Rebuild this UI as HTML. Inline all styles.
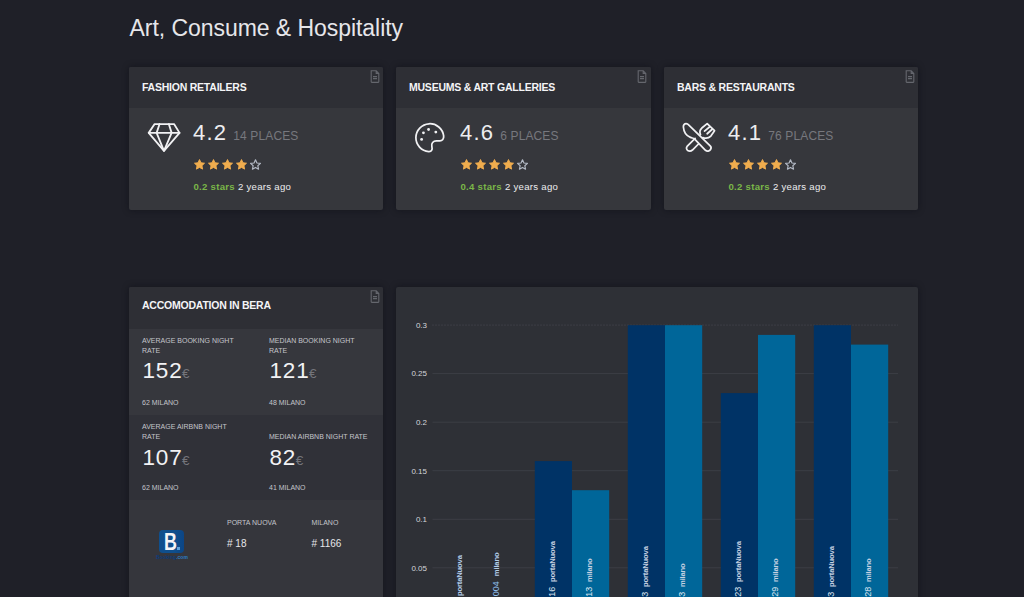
<!DOCTYPE html>
<html lang="en">
<head>
<meta charset="utf-8">
<title>Art, Consume &amp; Hospitality</title>
<style>
*{box-sizing:border-box;margin:0;padding:0}
html,body{width:1024px;height:597px;overflow:hidden;background:#1f2028;font-family:"Liberation Sans",sans-serif;color:#f2f2f2}
.abs{position:absolute}
h1{position:absolute;left:129.5px;top:14px;font-size:23px;font-weight:normal;line-height:28px;color:#e6e6ea;white-space:nowrap;letter-spacing:-0.05px}
.card{position:absolute;background:#36373c;border-radius:2px;box-shadow:0 0 7px rgba(8,8,14,.42)}
.card .hd{position:absolute;left:0;top:0;right:0;background:#2e2f35;border-radius:2px 2px 0 0}
.card .tt{position:absolute;left:13px;font-size:10.5px;font-weight:bold;letter-spacing:-0.23px;color:#f4f4f6;white-space:nowrap;line-height:12px}
.fi{position:absolute;right:3px;top:3px;width:10px;height:13px}
.num{position:absolute;font-size:22px;letter-spacing:1.2px;line-height:24px;color:#ededf0;white-space:nowrap}
.pl{position:absolute;font-size:12px;letter-spacing:0.12px;line-height:14px;color:#77787e;white-space:nowrap}
.stars{position:absolute;left:64px;top:91px;width:70px;height:12px}
.ago{position:absolute;left:64.5px;top:114.2px;font-size:9.6px;letter-spacing:0.28px;line-height:12px;white-space:nowrap;color:#ececee}
.ago b{color:#7ab648}
.ico{position:absolute}
.lab{position:absolute;font-size:7px;line-height:10.4px;color:#c4c5cb;white-space:nowrap}
.big{position:absolute;font-size:22.5px;letter-spacing:0.8px;line-height:24px;color:#f2f2f4;white-space:nowrap}
.big span{font-size:13.5px;color:#74757b;margin-left:-0.5px;letter-spacing:0}
.v{position:absolute;font-size:10px;line-height:12px;color:#e6e6ea;white-space:nowrap}
</style>
</head>
<body>
<h1 id="h1">Art, Consume &amp; Hospitality</h1>

<!-- card 1 -->
<div class="card" id="c1" style="left:129px;top:67px;width:254px;height:143px">
  <div class="hd" style="height:41px"></div>
  <div class="tt" id="t1" style="top:14.2px">FASHION RETAILERS</div>
  <svg class="fi" viewBox="0 0 10 13"><path d="M1.2 0.8h5l2.6 2.6v8.4a0.6 0.6 0 0 1-.6.6h-6.4a0.6 0.6 0 0 1-.6-.6z M6.2 0.8v2.6h2.6" fill="none" stroke="#65676e" stroke-width="1.1"/><path d="M3 6.6h4M3 8.6h4" stroke="#65676e" stroke-width="1.1"/></svg>
  <svg class="ico" style="left:13px;top:51px" width="48" height="40" viewBox="0 0 716 597" fill="none" stroke="#f1f1f3" stroke-width="27" stroke-linejoin="round" stroke-linecap="round">
    <path d="M188 90H478L560 222L328 490L100 222Z"/>
    <path d="M100 222H560"/>
    <path d="M262 90L218 222L328 490L442 222L400 90"/>
  </svg>
  <div class="num" id="n1" style="left:64px;top:53.8px">4.2</div>
  <div class="pl" id="p1" style="left:104.3px;top:62px">14 PLACES</div>
  <svg class="stars" viewBox="0 -0.55 70 12">
    <g fill="#f0ad4e" stroke="#f0ad4e" stroke-width="0.9" stroke-linejoin="round">
      <polygon transform="translate(6.5,6.3)" points="0.00,-5.30 1.53,-2.10 5.04,-1.64 2.47,0.80 3.12,4.29 0.00,2.60 -3.12,4.29 -2.47,0.80 -5.04,-1.64 -1.53,-2.10"/>
      <polygon transform="translate(20.5,6.3)" points="0.00,-5.30 1.53,-2.10 5.04,-1.64 2.47,0.80 3.12,4.29 0.00,2.60 -3.12,4.29 -2.47,0.80 -5.04,-1.64 -1.53,-2.10"/>
      <polygon transform="translate(34.5,6.3)" points="0.00,-5.30 1.53,-2.10 5.04,-1.64 2.47,0.80 3.12,4.29 0.00,2.60 -3.12,4.29 -2.47,0.80 -5.04,-1.64 -1.53,-2.10"/>
      <polygon transform="translate(48.5,6.3)" points="0.00,-5.30 1.53,-2.10 5.04,-1.64 2.47,0.80 3.12,4.29 0.00,2.60 -3.12,4.29 -2.47,0.80 -5.04,-1.64 -1.53,-2.10"/>
    </g>
    <polygon transform="translate(62.5,6.4)" fill="none" stroke="#b4bac6" stroke-width="1.15" stroke-linejoin="round" points="0.00,-5.20 1.45,-1.96 4.95,-1.60 2.30,0.75 3.06,4.21 0.00,2.45 -3.06,4.21 -2.30,0.75 -4.95,-1.60 -1.45,-1.96"/>
  </svg>
  <div class="ago" id="a1"><b>0.2 stars</b> 2 years ago</div>
</div>

<!-- card 2 -->
<div class="card" id="c2" style="left:396px;top:67px;width:255px;height:143px">
  <div class="hd" style="height:41px"></div>
  <div class="tt" id="t2" style="top:14.2px">MUSEUMS &amp; ART GALLERIES</div>
  <svg class="fi" style="right:4px" viewBox="0 0 10 13"><path d="M1.2 0.8h5l2.6 2.6v8.4a0.6 0.6 0 0 1-.6.6h-6.4a0.6 0.6 0 0 1-.6-.6z M6.2 0.8v2.6h2.6" fill="none" stroke="#65676e" stroke-width="1.1"/><path d="M3 6.6h4M3 8.6h4" stroke="#65676e" stroke-width="1.1"/></svg>
  <svg class="ico" style="left:12px;top:51px" width="48" height="40" viewBox="0 0 716 597" fill="none" stroke="#f1f1f3" stroke-width="26" stroke-linejoin="round" stroke-linecap="round">
    <path transform="translate(4,6)" d="M528 262A208 208 0 1 0 305 495C352 497 362 462 352 420C340 370 372 338 420 336L470 335C510 333 532 305 528 262Z"/>
    <g fill="#f1f1f3" stroke="none"><circle cx="307" cy="172" r="21"/><circle cx="230" cy="222" r="21"/><circle cx="415" cy="210" r="21"/><circle cx="203" cy="320" r="21"/></g>
  </svg>
  <div class="num" id="n2" style="left:64px;top:53.8px">4.6</div>
  <div class="pl" id="p2" style="left:104.3px;top:62px">6 PLACES</div>
  <svg class="stars" viewBox="0 -0.55 70 12">
    <g fill="#f0ad4e" stroke="#f0ad4e" stroke-width="0.9" stroke-linejoin="round">
      <polygon transform="translate(6.5,6.3)" points="0.00,-5.30 1.53,-2.10 5.04,-1.64 2.47,0.80 3.12,4.29 0.00,2.60 -3.12,4.29 -2.47,0.80 -5.04,-1.64 -1.53,-2.10"/>
      <polygon transform="translate(20.5,6.3)" points="0.00,-5.30 1.53,-2.10 5.04,-1.64 2.47,0.80 3.12,4.29 0.00,2.60 -3.12,4.29 -2.47,0.80 -5.04,-1.64 -1.53,-2.10"/>
      <polygon transform="translate(34.5,6.3)" points="0.00,-5.30 1.53,-2.10 5.04,-1.64 2.47,0.80 3.12,4.29 0.00,2.60 -3.12,4.29 -2.47,0.80 -5.04,-1.64 -1.53,-2.10"/>
      <polygon transform="translate(48.5,6.3)" points="0.00,-5.30 1.53,-2.10 5.04,-1.64 2.47,0.80 3.12,4.29 0.00,2.60 -3.12,4.29 -2.47,0.80 -5.04,-1.64 -1.53,-2.10"/>
    </g>
    <polygon transform="translate(62.5,6.4)" fill="none" stroke="#b4bac6" stroke-width="1.15" stroke-linejoin="round" points="0.00,-5.20 1.45,-1.96 4.95,-1.60 2.30,0.75 3.06,4.21 0.00,2.45 -3.06,4.21 -2.30,0.75 -4.95,-1.60 -1.45,-1.96"/>
  </svg>
  <div class="ago" id="a2"><b>0.4 stars</b> 2 years ago</div>
</div>

<!-- card 3 -->
<div class="card" id="c3" style="left:664px;top:67px;width:254px;height:143px">
  <div class="hd" style="height:41px"></div>
  <div class="tt" id="t3" style="top:14.2px">BARS &amp; RESTAURANTS</div>
  <svg class="fi" viewBox="0 0 10 13"><path d="M1.2 0.8h5l2.6 2.6v8.4a0.6 0.6 0 0 1-.6.6h-6.4a0.6 0.6 0 0 1-.6-.6z M6.2 0.8v2.6h2.6" fill="none" stroke="#65676e" stroke-width="1.1"/><path d="M3 6.6h4M3 8.6h4" stroke="#65676e" stroke-width="1.1"/></svg>
  <svg class="ico" style="left:12px;top:51px" width="48" height="40" viewBox="0 0 716 597" fill="none" stroke="#f1f1f3" stroke-width="26" stroke-linejoin="round" stroke-linecap="round">
    <!-- fork -->
    <path d="M285 305L165 425C150 445 155 470 175 485C200 500 225 495 245 478L335 388"/>
    <path d="M400 292C440 305 490 300 520 270L575 190L465 85L385 150C350 180 352 215 365 248"/>
    <path d="M500 135L425 195M540 168L465 235"/>
    <!-- knife -->
    <path d="M150 85C125 85 108 105 110 135C115 200 150 265 215 290C240 300 262 300 275 312L440 482C465 502 500 495 515 470C528 450 525 430 510 415L180 95C170 88 160 85 150 85Z"/>
  </svg>
  <div class="num" id="n3" style="left:64px;top:53.8px">4.1</div>
  <div class="pl" id="p3" style="left:104.3px;top:62px">76 PLACES</div>
  <svg class="stars" viewBox="0 -0.55 70 12">
    <g fill="#f0ad4e" stroke="#f0ad4e" stroke-width="0.9" stroke-linejoin="round">
      <polygon transform="translate(6.5,6.3)" points="0.00,-5.30 1.53,-2.10 5.04,-1.64 2.47,0.80 3.12,4.29 0.00,2.60 -3.12,4.29 -2.47,0.80 -5.04,-1.64 -1.53,-2.10"/>
      <polygon transform="translate(20.5,6.3)" points="0.00,-5.30 1.53,-2.10 5.04,-1.64 2.47,0.80 3.12,4.29 0.00,2.60 -3.12,4.29 -2.47,0.80 -5.04,-1.64 -1.53,-2.10"/>
      <polygon transform="translate(34.5,6.3)" points="0.00,-5.30 1.53,-2.10 5.04,-1.64 2.47,0.80 3.12,4.29 0.00,2.60 -3.12,4.29 -2.47,0.80 -5.04,-1.64 -1.53,-2.10"/>
      <polygon transform="translate(48.5,6.3)" points="0.00,-5.30 1.53,-2.10 5.04,-1.64 2.47,0.80 3.12,4.29 0.00,2.60 -3.12,4.29 -2.47,0.80 -5.04,-1.64 -1.53,-2.10"/>
    </g>
    <polygon transform="translate(62.5,6.4)" fill="none" stroke="#b4bac6" stroke-width="1.15" stroke-linejoin="round" points="0.00,-5.20 1.45,-1.96 4.95,-1.60 2.30,0.75 3.06,4.21 0.00,2.45 -3.06,4.21 -2.30,0.75 -4.95,-1.60 -1.45,-1.96"/>
  </svg>
  <div class="ago" id="a3"><b>0.2 stars</b> 2 years ago</div>
</div>


<!-- accomodation panel -->
<div class="card" id="c4" style="left:129px;top:286.7px;width:254.3px;height:330px;background:#35363c">
  <div class="hd" style="height:42px"></div>
  <div class="tt" id="t4" style="top:12.5px">ACCOMODATION IN BERA</div>
  <svg class="fi" viewBox="0 0 10 13"><path d="M1.2 0.8h5l2.6 2.6v8.4a0.6 0.6 0 0 1-.6.6h-6.4a0.6 0.6 0 0 1-.6-.6z M6.2 0.8v2.6h2.6" fill="none" stroke="#65676e" stroke-width="1.1"/><path d="M3 6.6h4M3 8.6h4" stroke="#65676e" stroke-width="1.1"/></svg>
  <div class="abs" style="left:0;top:42px;width:254px;height:86px;background:#36373d"></div>
  <div class="abs" style="left:0;top:128px;width:254px;height:85px;background:#303138"></div>
  <div class="lab" id="l1" style="left:13px;top:49px">AVERAGE BOOKING NIGHT<br>RATE</div>
  <div class="lab" id="l2" style="left:140px;top:49px">MEDIAN BOOKING NIGHT<br>RATE</div>
  <div class="big" id="b1" style="left:13.5px;top:72.8px">152<span>€</span></div>
  <div class="big" id="b2" style="left:140.5px;top:72.8px">121<span>€</span></div>
  <div class="lab" id="m1" style="left:13px;top:111px">62 MILANO</div>
  <div class="lab" id="m2" style="left:140px;top:111px">48 MILANO</div>

  <div class="lab" id="l3" style="left:13px;top:135px">AVERAGE AIRBNB NIGHT<br>RATE</div>
  <div class="lab" id="l4" style="left:140px;top:145px">MEDIAN AIRBNB NIGHT RATE</div>
  <div class="big" id="b3" style="left:13.5px;top:159px">107<span>€</span></div>
  <div class="big" id="b4" style="left:140.5px;top:159px">82<span>€</span></div>
  <div class="lab" id="m3" style="left:13px;top:196.5px">62 MILANO</div>
  <div class="lab" id="m4" style="left:140px;top:196.5px">41 MILANO</div>

  <div class="abs" id="logo" style="left:30.4px;top:243px;width:24.7px;height:23.2px;border-radius:4px;background:linear-gradient(90deg,#0f4f8d 0%,#0f4f8d 60%,#0b4585 100%)">
    <div class="abs" id="logoB" style="left:4.2px;top:-0.5px;font-size:23px;line-height:26px;font-weight:bold;color:#f4f4f6;transform:scaleX(.78);transform-origin:0 0">B</div>
    <div class="abs" style="left:17.5px;top:17px;width:3.4px;height:3.4px;background:#5fa3dc"></div>
  </div>
  <div class="abs" id="bk" style="left:27px;top:267px;font-size:5px;line-height:6px;font-weight:bold;color:#0c3b7a;white-space:nowrap;letter-spacing:0.02px">Booking<span style="color:#2b7cc4">.com</span></div>

  <div class="lab" id="pn" style="left:98px;top:231.3px">PORTA NUOVA</div>
  <div class="lab" id="mi" style="left:182.5px;top:231.3px">MILANO</div>
  <div class="v" id="v1" style="left:98px;top:251px"># 18</div>
  <div class="v" id="v2" style="left:182.5px;top:251px"># 1166</div>
  <div class="v" id="v3" style="left:98px;top:310px"># 231</div>
  <div class="v" id="v4" style="left:182.5px;top:310px"># 18055</div>
</div>

<!-- chart panel -->
<div class="card" id="c5" style="left:396px;top:286.7px;width:522px;height:330px;background:#2e3036"></div>
<svg class="abs" id="chart" style="left:396px;top:287px" width="521" height="310" viewBox="396 287 521 310" font-family="'Liberation Sans', sans-serif">
<line x1="432.5" x2="898" y1="325.1" y2="325.1" stroke="#4a4c54" stroke-width="1" stroke-dasharray="1 2"/>
<text x="427" y="327.9" font-size="8" fill="#d4d5da" text-anchor="end">0.3</text>
<line x1="432.5" x2="898" y1="373.6" y2="373.6" stroke="#3c3e45" stroke-width="1"/>
<text x="427" y="376.4" font-size="8" fill="#d4d5da" text-anchor="end">0.25</text>
<line x1="432.5" x2="898" y1="422.2" y2="422.2" stroke="#3c3e45" stroke-width="1"/>
<text x="427" y="425.0" font-size="8" fill="#d4d5da" text-anchor="end">0.2</text>
<line x1="432.5" x2="898" y1="470.7" y2="470.7" stroke="#3c3e45" stroke-width="1"/>
<text x="427" y="473.5" font-size="8" fill="#d4d5da" text-anchor="end">0.15</text>
<line x1="432.5" x2="898" y1="519.3" y2="519.3" stroke="#3c3e45" stroke-width="1"/>
<text x="427" y="522.1" font-size="8" fill="#d4d5da" text-anchor="end">0.1</text>
<line x1="432.5" x2="898" y1="567.8" y2="567.8" stroke="#3c3e45" stroke-width="1"/>
<text x="427" y="570.6" font-size="8" fill="#d4d5da" text-anchor="end">0.05</text>
<rect x="479.0" y="612.5" width="37.2" height="3.9" fill="#006699"/>
<text transform="translate(461.6,605.8) rotate(-90)" font-size="9" fill="#8fbfec">0 <tspan dx="2.3" font-size="7.7" font-weight="bold" fill="#b4cdea" letter-spacing="-0.2">portaNuova</tspan></text>
<text transform="translate(498.8,603.8) rotate(-90)" font-size="9" fill="#8fbfec">0.004 <tspan dx="2.6" font-size="7.7" font-weight="bold" fill="#b4cdea" letter-spacing="-0.2">milano</tspan></text>
<rect x="534.8" y="461.1" width="37.2" height="155.3" fill="#003366"/>
<rect x="572.0" y="490.2" width="37.2" height="126.2" fill="#006699"/>
<text transform="translate(554.6,604.3) rotate(-90)" font-size="9" fill="#dfe6f2">0.16 <tspan dx="2.3" font-size="7.7" font-weight="bold" fill="#c6d1e2" letter-spacing="-0.2">portaNuova</tspan></text>
<text transform="translate(591.8,604.3) rotate(-90)" font-size="9" fill="#dfe6f2">0.13 <tspan dx="2.3" font-size="7.7" font-weight="bold" fill="#c6d1e2" letter-spacing="-0.2">milano</tspan></text>
<rect x="627.8" y="325.2" width="37.2" height="291.2" fill="#003366"/>
<rect x="665.0" y="325.2" width="37.2" height="291.2" fill="#006699"/>
<text transform="translate(647.6,604.3) rotate(-90)" font-size="9" fill="#dfe6f2">0.3 <tspan dx="2.3" font-size="7.7" font-weight="bold" fill="#c6d1e2" letter-spacing="-0.2">portaNuova</tspan></text>
<text transform="translate(684.8,604.3) rotate(-90)" font-size="9" fill="#dfe6f2">0.3 <tspan dx="2.3" font-size="7.7" font-weight="bold" fill="#c6d1e2" letter-spacing="-0.2">milano</tspan></text>
<rect x="720.8" y="393.1" width="37.2" height="223.3" fill="#003366"/>
<rect x="758.0" y="334.9" width="37.2" height="281.5" fill="#006699"/>
<text transform="translate(740.6,604.3) rotate(-90)" font-size="9" fill="#dfe6f2">0.23 <tspan dx="2.3" font-size="7.7" font-weight="bold" fill="#c6d1e2" letter-spacing="-0.2">portaNuova</tspan></text>
<text transform="translate(777.8,604.3) rotate(-90)" font-size="9" fill="#dfe6f2">0.29 <tspan dx="2.3" font-size="7.7" font-weight="bold" fill="#c6d1e2" letter-spacing="-0.2">milano</tspan></text>
<rect x="813.8" y="325.2" width="37.2" height="291.2" fill="#003366"/>
<rect x="851.0" y="344.6" width="37.2" height="271.8" fill="#006699"/>
<text transform="translate(833.6,604.3) rotate(-90)" font-size="9" fill="#dfe6f2">0.3 <tspan dx="2.3" font-size="7.7" font-weight="bold" fill="#c6d1e2" letter-spacing="-0.2">portaNuova</tspan></text>
<text transform="translate(870.8,604.3) rotate(-90)" font-size="9" fill="#dfe6f2">0.28 <tspan dx="2.3" font-size="7.7" font-weight="bold" fill="#c6d1e2" letter-spacing="-0.2">milano</tspan></text>
</svg>
</body>
</html>
